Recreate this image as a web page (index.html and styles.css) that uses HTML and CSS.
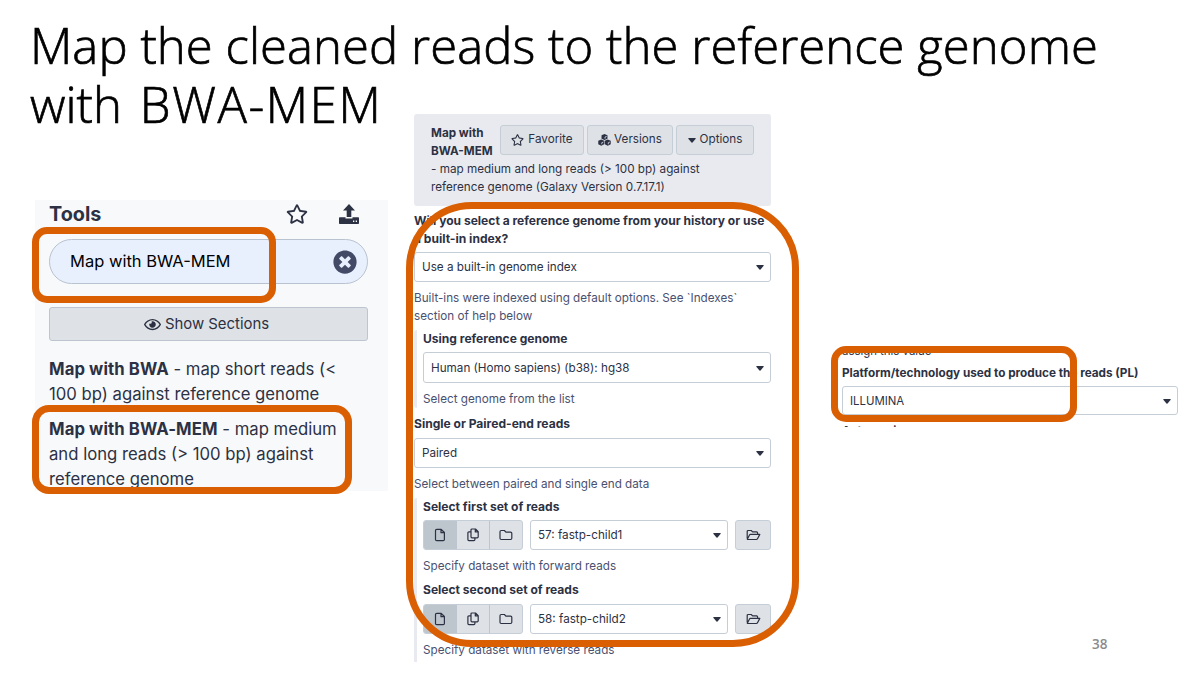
FILE: index.html
```html
<!DOCTYPE html>
<html lang="en">
<head>
<meta charset="utf-8">
<title>Map the cleaned reads</title>
<link rel="stylesheet" href="styles.css">
</head>
<body>
<svg class="defs" aria-hidden="true">
  <symbol id="star" viewBox="0 0 576 512"><path d="M528.1 171.5L382 150.2 316.7 17.8c-11.7-23.6-45.6-23.9-57.4 0L194 150.2 47.9 171.5c-26.2 3.8-36.7 36.1-17.7 54.6l105.7 103-25 145.5c-4.5 26.3 23.2 46 46.4 33.7L288 439.6l130.7 68.7c23.2 12.2 50.9-7.4 46.4-33.7l-25-145.5 105.7-103c19-18.5 8.5-50.8-17.7-54.6zM388.6 312.3l23.7 138.4L288 385.4l-124.3 65.3 23.7-138.4-100.6-98 139-20.2 62.2-126 62.2 126 139 20.2-100.6 98z"/></symbol>
  <symbol id="eye" viewBox="0 0 576 512"><path d="M288 144a110.94 110.94 0 0 0-31.24 5 55.4 55.4 0 0 1 7.24 27 56 56 0 0 1-56 56 55.4 55.4 0 0 1-27-7.24A111.71 111.71 0 1 0 288 144zm284.52 97.4C518.29 135.59 410.93 64 288 64S57.68 135.64 3.48 241.41a32.35 32.35 0 0 0 0 29.19C57.71 376.41 165.07 448 288 448s230.32-71.64 284.52-177.41a32.35 32.35 0 0 0 0-29.19zM288 400c-98.65 0-189.09-55-237.93-144C98.91 167 189.34 112 288 112s189.09 55 237.93 144C477.1 345 386.66 400 288 400z"/></symbol>
  <symbol id="clear" viewBox="0 0 512 512"><path d="M256 8C119 8 8 119 8 256s111 248 248 248 248-111 248-248S393 8 256 8zm121.6 313.1c4.7 4.7 4.7 12.3 0 17L338 377.6c-4.7 4.7-12.3 4.7-17 0L256 312l-65.1 65.6c-4.7 4.7-12.3 4.7-17 0L134.4 338c-4.7-4.7-4.7-12.3 0-17l65.6-65-65.6-65.1c-4.7-4.7-4.7-12.3 0-17l39.6-39.6c4.7-4.7 12.3-4.7 17 0l65 65.7 65.1-65.6c4.7-4.7 12.3-4.7 17 0l39.6 39.6c4.7 4.7 4.7 12.3 0 17L312 256l65.6 65.1z"/></symbol>
  <symbol id="upload" viewBox="0 0 20 20"><path d="M10 0l6 6.600h-3.700v6.400H7.700V6.600H4z"/><path d="M.8 13.200h5.700v1.300h7v-1.300h5.700q.8 0 .8.800v5.200q0 .8-.8.800H.8q-.8 0-.8-.8V14q0-.8.8-.8zM14 16.500v1.500h1.300v-1.500zm2.700 0v1.500H18v-1.500z" fill-rule="evenodd"/></symbol>
  <symbol id="cubes" viewBox="0 0 24 22"><path d="M12 0l5.500 2v6.500L12 11 6.500 8.500V2zM6 10l5.500 2.500v6.500L6 21.500.5 19v-6.500zM18 10l5.500 2.500V19L18 21.500 12.500 19v-6.500z"/><path class="facet" d="M13 8.500V5.500l3-1.200M7 19V16l3-1.200M19 19V16l3-1.200"/></symbol>
  <symbol id="caret" viewBox="0 0 8 5"><path d="M.7 0h6.600q.8.100.2.900L4.500 4.600q-.5.500-1 0L.5.900Q-.1.100.7 0z"/></symbol>
  <symbol id="file" viewBox="0 0 12 14"><path class="line" d="M2.700 1.300h4.500l3.200 3.200v7q0 1.200-1.200 1.200H2.700q-1.200 0-1.200-1.200v-9q0-1.200 1.200-1.200zM7 1.500v3.200h3.300"/></symbol>
  <symbol id="copy" viewBox="0 0 12 14"><path class="line" d="M5 1h3.500L11.200 3.700v5.100q0 1-1 1H5q-1 0-1-1V2q0-1 1-1zM8.300 1.200v2.700H11M4 3.800H1.900q-1 0-1 1v6.800q0 1 1 1h5q1 0 1-1V9.900"/></symbol>
  <symbol id="folder" viewBox="0 0 14 12"><path class="line" d="M2.200 1.500h3.200l1.500 1.600h4.700q1.200 0 1.200 1.200v5q0 1.200-1.200 1.200H2.200Q1 10.500 1 9.300V2.700q0-1.200 1.200-1.200z"/></symbol>
  <symbol id="open" viewBox="0 0 15 12"><path class="line" d="M1.200 9.500V2.500q0-1 1-1h3l1.400 1.400h4q1 0 1 1v1.500M1.300 10.200L3.500 6q.3-.6 1-.6h9.300L11.500 9.700q-.4.800-1.200.8H1.500z"/></symbol>
</svg>
<main class="slide">
  <h1 class="title">Map the cleaned reads to the reference genome<br>with <span class="caps">BWA-MEM</span></h1>
  <div class="shots">
    <section class="tools">
      <header class="tools-head"><h2>Tools</h2><svg class="i-star"><use href="#star"/></svg><svg class="i-upload"><use href="#upload"/></svg></header>
      <div class="search"><span>Map with BWA-MEM</span><svg><use href="#clear"/></svg></div>
      <div class="show"><svg><use href="#eye"/></svg><span>Show Sections</span></div>
      <p class="tool"><b>Map with BWA</b> - map short reads (&lt;<br>100 bp) against reference genome</p>
      <p class="tool"><b>Map with BWA-MEM</b> - map medium<br>and long reads (&gt; 100 bp) against<br>reference genome</p>
    </section>

    <section class="form">
      <header class="form-head">
        <div class="head-row">
          <b>Map with<br>BWA-MEM</b>
          <div class="btn fav"><svg class="b-star"><use href="#star"/></svg>Favorite</div>
          <div class="btn ver"><svg class="b-cubes"><use href="#cubes"/></svg>Versions</div>
          <div class="btn opt"><svg class="caret"><use href="#caret"/></svg>Options</div>
        </div>
        <p>- map medium and long reads (&gt; 100 bp) against<br>reference genome (Galaxy Version 0.7.17.1)</p>
      </header>
      <b class="label first">Will you select a reference genome from your history or use<br>a built-in index?</b>
      <div class="select">Use a built-in genome index<svg class="caret"><use href="#caret"/></svg></div>
      <p class="help">Built-ins were indexed using default options. See `Indexes`<br>section of help below</p>
      <div class="nested one">
        <b class="label">Using reference genome</b>
        <div class="select tall">Human (Homo sapiens) (b38): hg38<svg class="caret"><use href="#caret"/></svg></div>
        <p class="help">Select genome from the list</p>
      </div>
      <b class="label pair">Single or Paired-end reads</b>
      <div class="select">Paired<svg class="caret"><use href="#caret"/></svg></div>
      <p class="help">Select between paired and single end data</p>
      <div class="nested two">
        <b class="label">Select first set of reads</b>
        <div class="data">
          <div class="group"><i class="on"><svg class="i-file"><use href="#file"/></svg></i><i><svg class="i-file"><use href="#copy"/></svg></i><i><svg class="i-folder"><use href="#folder"/></svg></i></div>
          <div class="select">57: fastp-child1<svg class="caret"><use href="#caret"/></svg></div>
          <div class="browse"><svg class="i-open"><use href="#open"/></svg></div>
        </div>
        <p class="help">Specify dataset with forward reads</p>
        <b class="label second">Select second set of reads</b>
        <div class="data">
          <div class="group"><i class="on"><svg class="i-file"><use href="#file"/></svg></i><i><svg class="i-file"><use href="#copy"/></svg></i><i><svg class="i-folder"><use href="#folder"/></svg></i></div>
          <div class="select">58: fastp-child2<svg class="caret"><use href="#caret"/></svg></div>
          <div class="browse"><svg class="i-open"><use href="#open"/></svg></div>
        </div>
        <p class="help">Specify dataset with reverse reads</p>
      </div>
    </section>

    <section class="platform">
      <p class="cut-top">assign this value</p>
      <b class="label">Platform/technology used to produce the reads (PL)</b>
      <div class="select">ILLUMINA<svg class="caret"><use href="#caret"/></svg></div>
      <b class="cut-bottom">Auto-assign</b>
    </section>
  </div>
  <div class="mark m-search"></div>
  <div class="mark m-tool"></div>
  <div class="mark m-form"></div>
  <div class="mark m-platform"></div>
  <div class="page">38</div>
</main>
</body>
</html>
```
FILE: styles.css
```css
* { box-sizing: border-box; }
body { margin: 0; background: #fff; color: #2c3143; font-family: Inter, "Liberation Sans", sans-serif; }
h1, h2, p { margin: 0; }
svg { display: block; fill: currentColor; flex: none; }
.defs { position: absolute; width: 0; height: 0; }
.line { fill: none; stroke: currentColor; stroke-width: 1.2; stroke-linejoin: round; }
.facet { fill: none; stroke: #dee2e6; stroke-width: 1.5; }
.slide { position: relative; width: 1200px; height: 675px; overflow: hidden; }

.title { height: 114px; padding: 16px 0 0 30px; color: #000; font: 300 49px/59px "Open Sans", Lato, sans-serif; letter-spacing: .06px; white-space: nowrap; -webkit-text-stroke: .7px #000; }
.caps { margin-left: 5px; letter-spacing: 1.6px; }

.shots { display: flex; align-items: flex-start; padding-left: 35px; }

.tools { width: 353px; height: 291px; margin-top: 86px; padding: 0 20px 0 14px; background: #f8f9fb; font-size: 16.7px; line-height: 25px; }
.tools-head { display: flex; align-items: center; height: 28px; padding-right: 9px; }
.tools-head h2 { flex: 1; font-size: 19.8px; line-height: 28px; font-weight: 700; }
.i-star { width: 22px; height: 20px; margin-right: 31px; }
.i-upload { width: 20px; height: 20px; }
.search { display: flex; align-items: center; justify-content: space-between; height: 45px; margin-top: 11px; padding: 0 10px 0 20px; border: 1px solid #b9c2cf; border-radius: 23px; background: #e8f0fe; color: #000; font-size: 16.5px; }
.search svg { width: 24px; height: 24px; fill: #434a66; }
.show { display: flex; align-items: center; justify-content: center; gap: 4px; height: 34px; margin: 23px 0 16px; padding: 1px 4px 0 0; border: 1px solid #bdc6d0; border-radius: 3px; background: #dee2e6; font-size: 14.9px; }
.show svg { width: 17px; height: 15px; }
.tool { margin-bottom: 10px; white-space: nowrap; }
.tool b { letter-spacing: .1px; }

.form { width: 357px; height: 548px; margin-left: 26px; overflow: hidden; font-size: 11.7px; line-height: 17.5px; white-space: nowrap; }
.form-head { height: 92px; padding: 10.5px 17px 0; border-radius: 3px; background: #e9eaef; }
.head-row { display: flex; height: 36px; }
.head-row b { flex: 1; padding-top: .7px; }
.form-head p { padding-top: .5px; }
.btn { display: flex; align-items: center; justify-content: center; height: 30px; margin-left: 3px; padding-top: 1px; border: 1px solid #c5ced7; border-radius: 3px; background: #dee2e6; }
.fav { width: 84px; }
.ver { width: 86px; }
.opt { width: 78px; }
.b-star { width: 13px; height: 12px; margin-right: 4px; }
.b-cubes { width: 13px; height: 12px; margin-right: 3px; }
.caret { width: 8px; height: 5px; }
.btn .caret { margin-right: 4px; }
.label { display: block; color: #2c3143; font-size: 12.05px; }
.first { margin-top: 6px; }
.select { display: flex; align-items: center; justify-content: space-between; height: 30px; margin-top: 5px; padding: 2px 6px 0 7px; border: 1px solid #c5ced7; border-radius: 3px; background: #fff; }
.select .caret { margin-bottom: 1px; }
.tall { height: 31px; }
.help { margin-top: 8px; margin-bottom: -.5px; color: #4a5170; }
.nested { border-left: 3px solid #e9eaef; padding-left: 6px; }
.one { height: 78px; margin-top: 5px; border-radius: 3px 0 0 3px; }
.two { height: 165px; margin-top: 5px; border-top-left-radius: 3px; }
.pair { margin-top: 7.5px; }
.second { margin-top: 6px; }
.data { display: flex; height: 30px; margin-top: 5px; }
.data .select { flex: 1; margin: 0 7px; }
.group { display: flex; width: 100px; border: 1px solid #c5ced7; border-radius: 3px; background: #dee2e6; overflow: hidden; }
.group i { display: flex; align-items: center; justify-content: center; flex: 1; border-left: 1px solid #bdc6d0; }
.group i.on { background: #bdc5cd; border-left: 0; }
.i-file { width: 12px; height: 14px; }
.i-folder { width: 14px; height: 12px; }
.i-open { width: 15px; height: 12px; }
.browse { display: flex; align-items: center; justify-content: center; width: 36px; border: 1px solid #c5ced7; border-radius: 3px; background: #dee2e6; }

.platform { width: 344px; height: 75px; margin: 238px 0 0 63px; padding-left: 8px; overflow: hidden; font-size: 11.4px; line-height: 17.5px; white-space: nowrap; }
.cut-top { margin-top: -9.5px; height: 17px; }
.platform .label { margin-top: 5.5px; height: 17px; font-size: 11.75px; }
.platform .select { height: 29px; margin-top: 4px; }
.cut-bottom { display: block; margin-top: 7.5px; }

.mark { position: absolute; border: 7px solid #d95f02; }
.m-search { left: 32px; top: 227px; width: 244px; height: 76px; border-radius: 15px; }
.m-tool { left: 32px; top: 405px; width: 320px; height: 89px; border-radius: 17px; }
.m-form { left: 406px; top: 202px; width: 393px; height: 445px; border-radius: 66px; }
.m-platform { left: 831px; top: 346px; width: 246px; height: 76px; border-radius: 15px; }
.page { position: absolute; left: 1092px; top: 634px; color: #8b8b8b; font: 600 13.5px/20px "Open Sans", Lato, sans-serif; }
```
